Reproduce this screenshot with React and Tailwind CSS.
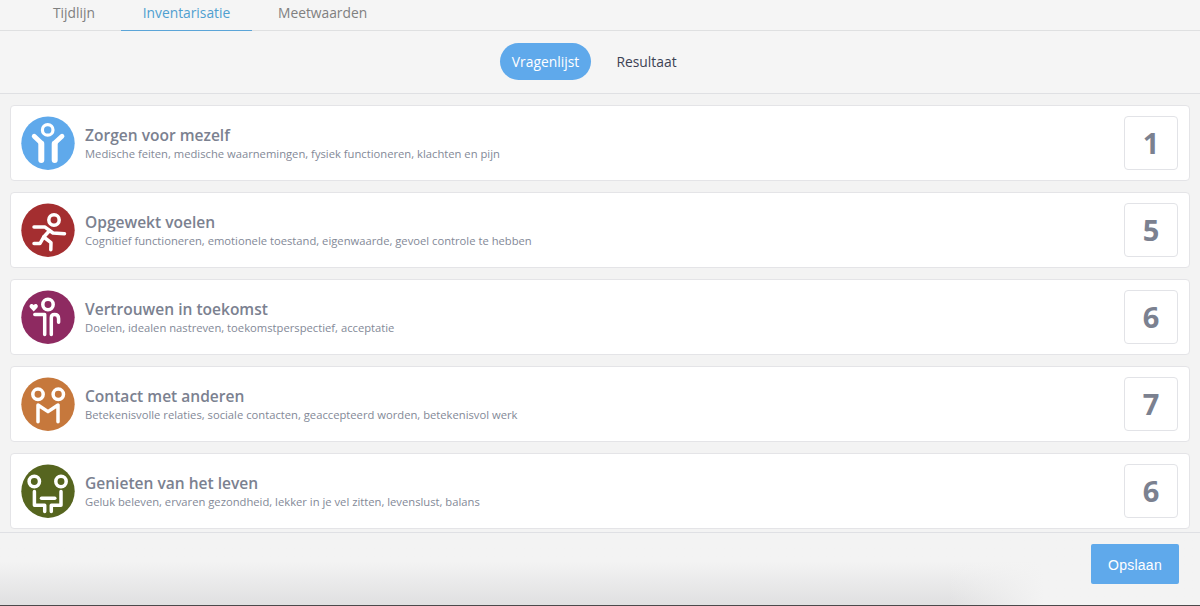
import React from "react";

function SelfCareIcon() {
  return (
    <>
      <circle cx="26.7" cy="13.9" r="5.3" strokeWidth="3.2" />
      <path d="M13.2 20.2 L20.3 27" strokeWidth="4.8" />
      <path d="M41 20.2 L33.7 27" strokeWidth="4.8" />
      <path d="M20.3 27.7 V44" strokeWidth="6" />
      <path d="M33.7 27.7 V44" strokeWidth="6" />
    </>
  );
}

function RunnerIcon() {
  return (
    <>
      <circle cx="33" cy="17" r="5.2" />
      <path d="M13 23.9 H23.7 L32 30 L43.5 30.7" />
      <path d="M28.5 27.7 L22.7 34 L19 40.5 H13" />
      <path d="M22.7 34 L30 39.6 L29.8 46.8" />
    </>
  );
}

function TrustIcon() {
  return (
    <>
      <circle cx="27" cy="14.5" r="5.2" />
      <path d="M13.8 24.5 H23.7 V44.4" />
      <path d="M30.3 44.4 V27.7 Q30.3 24.5 33.5 24.5 Q37.6 24.5 37.6 28.7 V32.2" />
      <path
        d="M12.7 21.4 L9.1 17.8 C7.2 15.4 10.6 12.5 12.7 15.1 C14.8 12.5 18.2 15.4 16.3 17.8 Z"
        fill="#fff"
        stroke="none"
      />
    </>
  );
}

function ContactIcon() {
  return (
    <>
      <circle cx="17" cy="17.3" r="5.2" />
      <circle cx="37.3" cy="17.3" r="5.2" />
      <path d="M17 44.8 V28 L27 34.6 L37 28 V44.8" />
    </>
  );
}

function EnjoyIcon() {
  return (
    <>
      <circle cx="13.3" cy="17.5" r="5.2" />
      <circle cx="40" cy="17.5" r="5.2" />
      <path d="M13.4 27.6 V41.2 H23.7 V47.4" />
      <path d="M40 27.6 V41.2 H30.3 V47.4" />
      <path d="M20.5 34.3 H33.8" />
    </>
  );
}

const topics = [
  {
    title: "Zorgen voor mezelf",
    text: "Medische feiten, medische waarnemingen, fysiek functioneren, klachten en pijn",
    score: 1,
    color: "text-[#5fa9eb]",
    Icon: SelfCareIcon,
  },
  {
    title: "Opgewekt voelen",
    text: "Cognitief functioneren, emotionele toestand, eigenwaarde, gevoel controle te hebben",
    score: 5,
    color: "text-[#a42e30]",
    Icon: RunnerIcon,
  },
  {
    title: "Vertrouwen in toekomst",
    text: "Doelen, idealen nastreven, toekomstperspectief, acceptatie",
    score: 6,
    color: "text-[#8e2a61]",
    Icon: TrustIcon,
  },
  {
    title: "Contact met anderen",
    text: "Betekenisvolle relaties, sociale contacten, geaccepteerd worden, betekenisvol werk",
    score: 7,
    color: "text-[#c6783c]",
    Icon: ContactIcon,
  },
  {
    title: "Genieten van het leven",
    text: "Geluk beleven, ervaren gezondheid, lekker in je vel zitten, levenslust, balans",
    score: 6,
    color: "text-[#56651f]",
    Icon: EnjoyIcon,
  },
];

function TopicCard({ title, text, score, color, Icon }) {
  return (
    <article className="flex h-[76px] shrink-0 items-center rounded-[4px] border border-[#e4e4e7] bg-white pr-[11px] pl-[10px]">
      <svg
        viewBox="0 0 54 54"
        className={`size-[54px] shrink-0 ${color}`}
        fill="none"
        stroke="#fff"
        strokeWidth="3.5"
        strokeLinecap="round"
        strokeLinejoin="round"
      >
        <circle cx="27" cy="27.2" r="26.7" fill="currentColor" stroke="none" />
        <Icon />
      </svg>
      <div className="ml-[10px] flex-1">
        <h2 className="text-[15.55px] leading-[22px] font-semibold text-[#7b8190]">{title}</h2>
        <p className="text-[11.22px] leading-[16px] text-[#838997]">{text}</p>
      </div>
      <div className="flex size-[54px] items-center justify-center rounded-[4px] border border-[#e2e3e7] text-[29px] font-bold text-[#7b8190]">
        {score}
      </div>
    </article>
  );
}

export default function App() {
  return (
    <div className="flex h-[606px] w-[1200px] flex-col overflow-hidden bg-[#f3f3f3] font-['Open_Sans',sans-serif]">
      <nav className="flex h-[31px] shrink-0 border-b border-[#dfe0e1] bg-[#f5f5f5] pl-[32px] text-[13.8px] leading-[26px] text-[#808080]">
        <a className="w-[89px] pl-[21px]">Tijdlijn</a>
        <a className="h-[31px] w-[131px] border-b border-[#5ba5d8] text-center text-[#4f9fd0]">Inventarisatie</a>
        <a className="pl-[26px]">Meetwaarden</a>
      </nav>
      <div className="flex h-[63px] shrink-0 border-b border-[#dfe0e3] bg-[#f5f5f5] pt-[12px] pl-[500px] text-[13.85px] leading-[38px]">
        <button className="h-[37px] w-[91px] rounded-full bg-[#5fa9eb] text-center text-white">Vragenlijst</button>
        <button className="ml-[14px] h-[37px] w-[83px] text-center text-[#3c4254]">Resultaat</button>
      </div>
      <main className="flex h-[438px] shrink-0 flex-col gap-[11px] pt-[11px] pr-[10px] pl-[10px]">
        {topics.map((topic) => (
          <TopicCard key={topic.title} {...topic} />
        ))}
      </main>
      <footer className="flex h-[74px] shrink-0 border-t border-b border-t-[#dfe0e4] border-b-[#4c494b] bg-linear-to-b from-[#f3f3f3] from-40% to-[#e0e0e1]">
        <div className="flex flex-1 justify-end bg-linear-to-r from-[#f3f3f3]/0 from-79% to-[#f3f3f3] to-87% pt-[11px] pr-[21px]">
          <button className="h-[40px] w-[88px] rounded-[2px] bg-[#5fa9eb] pt-[2px] font-['Liberation_Sans',sans-serif] text-[14px] tracking-[0.25px] text-white">
            Opslaan
          </button>
        </div>
      </footer>
    </div>
  );
}
